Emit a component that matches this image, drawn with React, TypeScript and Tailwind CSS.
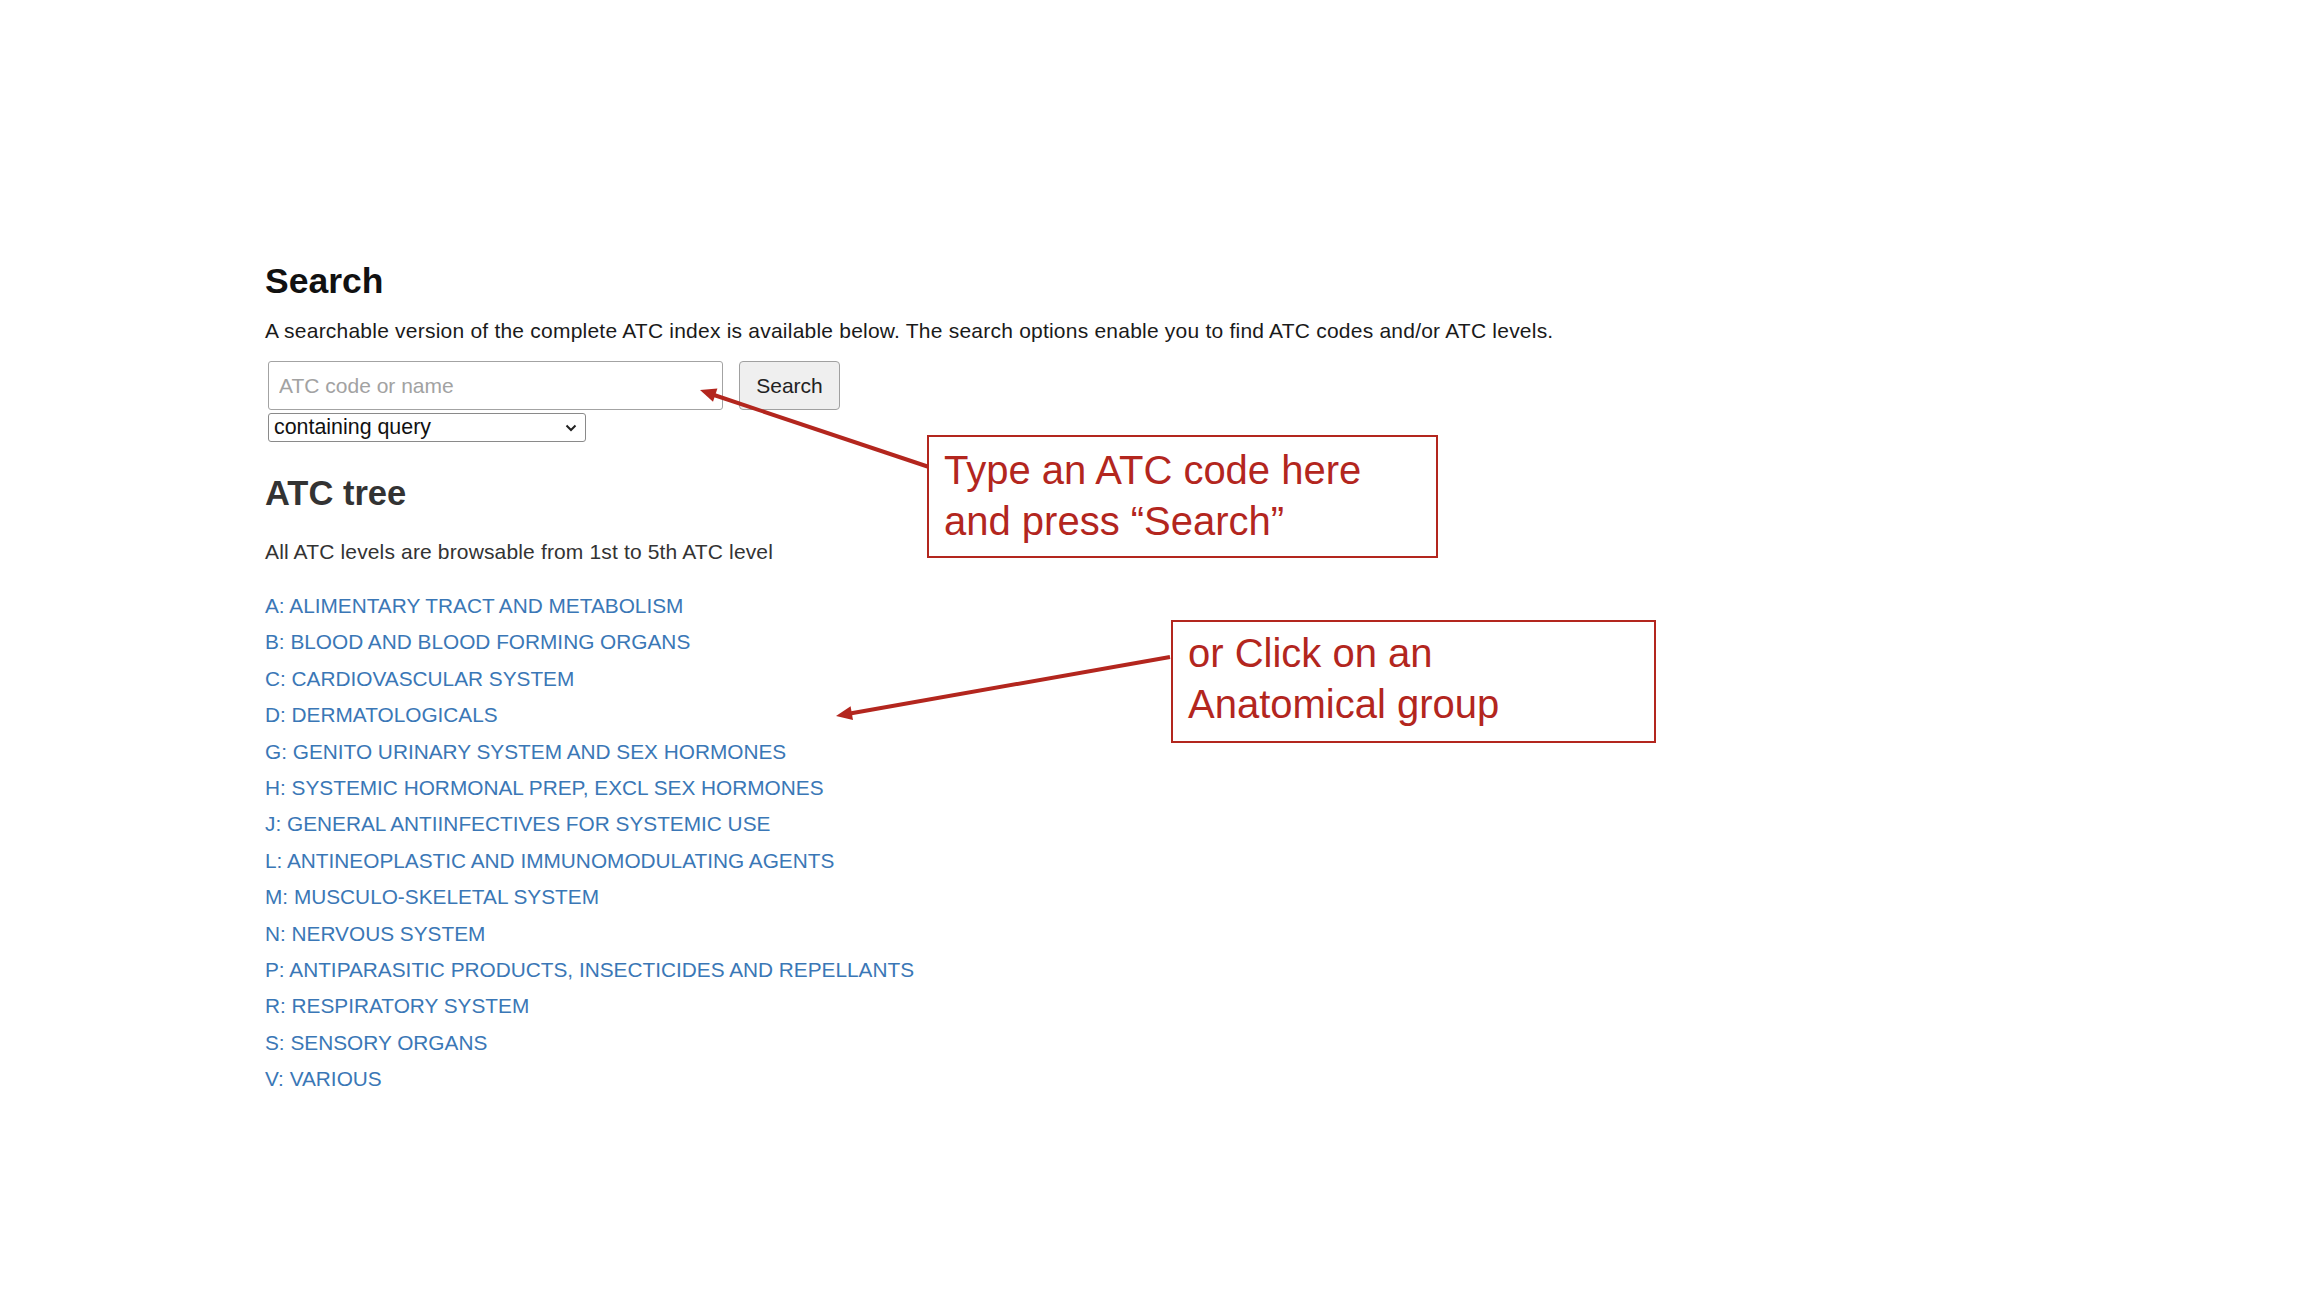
import React from "react";

const groups = [
  "A: ALIMENTARY TRACT AND METABOLISM",
  "B: BLOOD AND BLOOD FORMING ORGANS",
  "C: CARDIOVASCULAR SYSTEM",
  "D: DERMATOLOGICALS",
  "G: GENITO URINARY SYSTEM AND SEX HORMONES",
  "H: SYSTEMIC HORMONAL PREP, EXCL SEX HORMONES",
  "J: GENERAL ANTIINFECTIVES FOR SYSTEMIC USE",
  "L: ANTINEOPLASTIC AND IMMUNOMODULATING AGENTS",
  "M: MUSCULO-SKELETAL SYSTEM",
  "N: NERVOUS SYSTEM",
  "P: ANTIPARASITIC PRODUCTS, INSECTICIDES AND REPELLANTS",
  "R: RESPIRATORY SYSTEM",
  "S: SENSORY ORGANS",
  "V: VARIOUS",
];

const RED = "#b3261e";

const Arrows = () => (
  <svg
    className="absolute inset-0 pointer-events-none"
    width="2308"
    height="1300"
    viewBox="0 0 2308 1300"
  >
    {/* to the search input */}
    <line x1="929" y1="467" x2="714" y2="395" stroke={RED} strokeWidth="4" />
    <polygon points="700,390 717.4,388.5 713,401.7" fill={RED} />
    {/* to the anatomical groups */}
    <line x1="1170" y1="657" x2="850" y2="713.5" stroke={RED} strokeWidth="4" />
    <polygon points="836,716 853,720.1 850.6,706.3" fill={RED} />
  </svg>
);

export default function App() {
  return (
    <div className="relative min-h-screen bg-white font-['Liberation_Sans',Arial,sans-serif]">
      <div className="pl-[265px] pt-[261px] flex flex-col items-start">
        {/* Search */}
        <h2 className="text-[35.5px] leading-[40px] font-bold text-[#111]">Search</h2>
        <p className="mt-[18px] text-[21px] tracking-[0.22px] leading-[24px] text-[#1a1a1a]">
          A searchable version of the complete ATC index is available below. The search
          options enable you to find ATC codes and/or ATC levels.
        </p>

        <form className="mt-[18px] ml-[3px] flex flex-col" onSubmit={(e) => e.preventDefault()}>
          <div className="flex items-center gap-4">
            <input
              type="text"
              placeholder="ATC code or name"
              className="w-[455px] h-[49px] border border-[#a3a3a3] rounded-[3px] px-[10px] text-[21px] text-[#111] placeholder:text-[#a2a2a2] bg-white outline-none"
            />
            <button
              type="submit"
              className="w-[101px] h-[49px] border border-[#a0a0a0] rounded-[4px] bg-[#efefef] text-[21px] text-[#222]"
            >
              Search
            </button>
          </div>
          <div className="relative mt-[3px] w-[318px] h-[29px] border border-[#8a8a8a] rounded-[3px] bg-white flex items-center">
            <span className="pl-[5px] pt-[1px] text-[21.4px] leading-none text-[#111]">containing query</span>
            <svg
              className="absolute right-[8px] top-[9px]"
              width="12"
              height="10"
              viewBox="0 0 12 10"
            >
              <path d="M1.5 2.5 L6 7 L10.5 2.5" fill="none" stroke="#222" strokeWidth="2" />
            </svg>
          </div>
        </form>

        {/* ATC tree */}
        <h3 className="mt-[32px] text-[34.5px] leading-[38px] font-bold text-[#333]">ATC tree</h3>
        <p className="mt-[28px] text-[21px] tracking-[0.15px] leading-[24px] text-[#333]">
          All ATC levels are browsable from 1st to 5th ATC level
        </p>
        <ul className="mt-[24px] flex flex-col">
          {groups.map((g) => (
            <li key={g} className="text-[20.8px] leading-[36.4px]">
              <a href="#" className="text-[#3a77b6]">
                {g}
              </a>
            </li>
          ))}
        </ul>
      </div>

      {/* Annotations */}
      <Arrows />
      <div
        className="absolute left-[927px] top-[435px] w-[511px] h-[123px] border-2 bg-white pl-[15px] pt-[8px] text-[40px] leading-[51px]"
        style={{ borderColor: RED, color: RED }}
      >
        <div>Type an ATC code here</div>
        <div>and press “Search”</div>
      </div>
      <div
        className="absolute left-[1171px] top-[620px] w-[485px] h-[123px] border-2 bg-white pl-[15px] pt-[6px] text-[40px] leading-[51px]"
        style={{ borderColor: RED, color: RED }}
      >
        <div>or Click on an</div>
        <div>Anatomical group</div>
      </div>
    </div>
  );
}
